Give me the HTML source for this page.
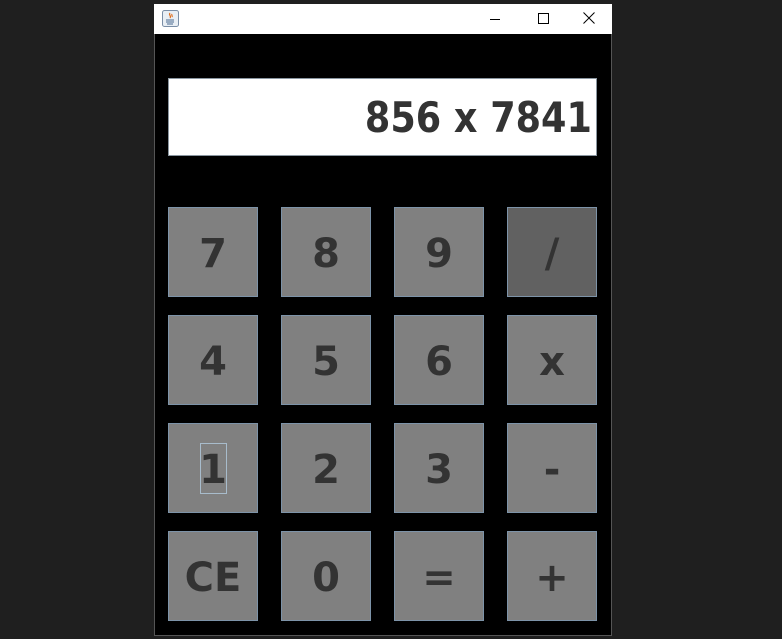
<!DOCTYPE html>
<html><head><meta charset="utf-8"><style>
html,body{margin:0;padding:0;width:782px;height:639px;background:#1f1f1f;overflow:hidden;position:relative;font-family:"DejaVu Sans","Liberation Sans",sans-serif}
.win{position:absolute;left:154px;top:4px;width:458px;height:632px;background:#000;border:1px solid #555;box-sizing:border-box}
.title{position:absolute;left:154px;top:4px;width:458px;height:30px;background:#fff}
.disp{position:absolute;left:168px;top:78px;width:429px;height:78px;background:#fff;border:1px solid #8a96a0;box-sizing:border-box;text-align:right;font-weight:bold;font-size:42px;color:#333;line-height:78px;padding-right:4px}
.disp span{display:inline-block;transform:scaleX(0.87);transform-origin:right center}
.b{position:absolute;width:90px;height:90px;background:#808080;border:1px solid #7d93a8;box-sizing:border-box;color:#333;font-weight:bold;font-size:40px;text-align:center;line-height:92px}
</style></head><body>
<div class="win"></div>
<div class="title">
<svg style="position:absolute;left:8px;top:6px" width="17" height="17" viewBox="0 0 17 17"><rect x="0.5" y="0.5" width="16" height="16" rx="2" fill="#e8eef4" stroke="#7a8ea6"/><path d="M8 3c-2 2 2 3 0 5M10 4c-1 1 1 2 0 3" stroke="#e07020" fill="none" stroke-width="1.2"/><path d="M4 10h8M4 12h8M5 14h6" stroke="#4a6a90"/></svg>
<svg style="position:absolute;left:334px;top:8px" width="14" height="14"><path d="M2 7.5h10" stroke="#000"/></svg>
<svg style="position:absolute;left:383px;top:8px" width="14" height="14"><rect x="1.5" y="1.5" width="10" height="10" fill="none" stroke="#000"/></svg>
<svg style="position:absolute;left:428px;top:7px" width="14" height="14"><path d="M1.5 1.5l11 11M12.5 1.5l-11 11" stroke="#000"/></svg>
</div>
<div class="disp"><span>856 x 7841</span></div>
<div class="b" style="left:168px;top:207px">7</div>
<div class="b" style="left:281px;top:207px">8</div>
<div class="b" style="left:394px;top:207px">9</div>
<div class="b" style="left:507px;top:207px;background:#616161">/</div>
<div class="b" style="left:168px;top:315px">4</div>
<div class="b" style="left:281px;top:315px">5</div>
<div class="b" style="left:394px;top:315px">6</div>
<div class="b" style="left:507px;top:315px">x</div>
<div class="b" style="left:168px;top:423px">1<div style="position:absolute;left:31px;top:19px;width:27px;height:51px;border:1px solid #a8bccc;box-sizing:border-box"></div></div>
<div class="b" style="left:281px;top:423px">2</div>
<div class="b" style="left:394px;top:423px">3</div>
<div class="b" style="left:507px;top:423px">-</div>
<div class="b" style="left:168px;top:531px">CE</div>
<div class="b" style="left:281px;top:531px">0</div>
<div class="b" style="left:394px;top:531px">=</div>
<div class="b" style="left:507px;top:531px">+</div>
</body></html>
